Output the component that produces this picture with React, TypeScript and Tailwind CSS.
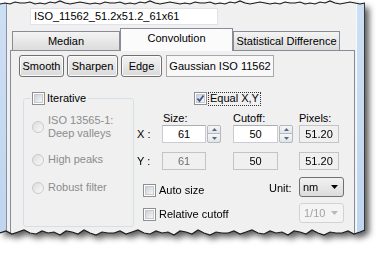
import type { ReactNode } from "react";

// torn paper edges of the screenshot
const topJag = [4, 3, 4, 2, 3, 3, 2, 4, 3, 4, 2, 3, 1, 3, 4, 3, 2, 3];
const botJag = [0, -2, 1, -1, -3, 0, 1, -2, 0, -1, 2, -2, -1, 1, -3, 0, 2, -1, 0];
const topEdge = Array.from({ length: 74 }, (_, i) => [Math.min(i * 5, 365), topJag[i % topJag.length]]);
const bottomEdge = Array.from({ length: 62 }, (_, i) => [Math.min(i * 6, 365), 233 + botJag[i % botJag.length]]);

const clip = `polygon(${[...topEdge, ...[...bottomEdge].reverse()].map(([x, y]) => `${x}px ${y}px`).join(",")})`;
const line = (pts: number[][]) => pts.map(([x, y]) => `${x},${y}`).join(" ");

const btn =
  "flex h-[22px] items-center justify-center rounded-[3px] border border-[#707070] bg-gradient-to-b from-[#f3f3f3] to-[#dadada] shadow-[inset_0_0_0_1px_#fbfbfb]";
const tab = "flex h-[19px] items-center justify-center border border-b-0 border-[#898c95] bg-gradient-to-b from-[#f4f4f4] to-[#dcdcdc]";
const field = "flex h-[18px] items-center justify-center border";

function CheckBox({ checked }: { checked?: boolean }) {
  return (
    <span className="relative flex h-[13px] w-[13px] shrink-0 items-center justify-center border border-[#8e8f8f] bg-white">
      <span className="h-[9px] w-[9px] border border-[#c6cad0] bg-gradient-to-br from-[#cdd1d6] to-[#f7f7f7]" />
      {checked && (
        <svg width="11" height="11" viewBox="0 0 11 11" className="absolute left-0 top-0">
          <path d="M2.5 5.5 L4.5 8 L8.5 2.5" fill="none" stroke="#3a5a94" strokeWidth="1.8" />
        </svg>
      )}
    </span>
  );
}

function Radio() {
  return <span className="h-[12px] w-[12px] shrink-0 rounded-full border border-[#c9c9c9] bg-gradient-to-br from-[#dcdcdc] to-[#fafafa]" />;
}

function Spinner() {
  return (
    <div className="ml-[1px] flex h-[18px] w-[14px] flex-col text-[#56688a]">
      <div className="flex h-[9px] items-center justify-center rounded-t-[2px] border border-[#b4b8bf] bg-gradient-to-b from-[#f7f7f7] to-[#e1e4e8]">
        <svg width="5" height="3" viewBox="0 0 5 3">
          <path d="M0 3H5L2.5 0Z" fill="currentColor" />
        </svg>
      </div>
      <div className="-mt-px flex h-[10px] items-center justify-center rounded-b-[2px] border border-[#b4b8bf] bg-gradient-to-b from-[#f7f7f7] to-[#e1e4e8]">
        <svg width="5" height="3" viewBox="0 0 5 3">
          <path d="M0 0H5L2.5 3Z" fill="currentColor" />
        </svg>
      </div>
    </div>
  );
}

function Select({ value, disabled }: { value: string; disabled?: boolean }) {
  return (
    <div
      className={
        disabled
          ? "flex h-[20px] w-[45px] items-center justify-between rounded-[3px] border border-[#d3d3d3] bg-[#f4f4f4] pl-[4px] pr-[5px] text-[#a3a3a3]"
          : "flex h-[20px] w-[45px] items-center justify-between rounded-[3px] border border-[#707070] bg-gradient-to-b from-[#f2f2f2] to-[#dcdcdc] pl-[3px] pr-[5px]"
      }
    >
      <span>{value}</span>
      <svg width="7" height="4" viewBox="0 0 7 4" className={disabled ? "text-[#b8b8b8]" : "text-black"}>
        <path d="M0 0H7L3.5 4Z" fill="currentColor" />
      </svg>
    </div>
  );
}

function Row({ children, className = "" }: { children: ReactNode; className?: string }) {
  return <div className={`flex items-center ${className}`}>{children}</div>;
}

export default function App() {
  return (
    <div className="relative h-[253px] w-[381px] overflow-hidden bg-white font-['Liberation_Sans',Arial,sans-serif] text-[11px] leading-[13px] text-black">
      <div className="h-[240px] w-[365px] [filter:drop-shadow(4px_4px_3px_rgba(0,0,0,0.65))]">
        <div className="flex h-full w-full bg-[#f0f0f0]" style={{ clipPath: clip }}>
          <div className="w-[6px] bg-gradient-to-b from-[#cddff3] to-[#bfd5ee]" />
          <div className="w-px bg-[#8593a6]" />

          <div className="flex w-[349px] flex-col">
            <div className="ml-[23px] mt-[8px] flex h-[17px] w-[188px] items-center border border-[#dfe2e8] bg-white pl-[3px]">
              ISO_11562_51.2x51.2_61x61
            </div>

            <div className="flex h-[25px] items-end pl-[5px]">
              <div className={`${tab} w-[108px]`}>Median</div>
              <div className="relative z-10 -mb-px flex h-[23px] w-[113px] justify-center border border-b-0 border-[#898c95] bg-[#fbfbfb] pt-[3px]">
                Convolution
              </div>
              <div className={`${tab} w-[107px]`}>Statistical Difference</div>
            </div>

            <div className="ml-[3px] w-[345px] flex-1 border-x border-t border-[#898c95] bg-[#f0f0f0]">
              <div className="flex pl-[8px] pt-[4px]">
                <div className={`${btn} w-[45px]`}>Smooth</div>
                <div className={`${btn} ml-[3px] w-[51px]`}>Sharpen</div>
                <div className={`${btn} ml-[3px] w-[41px]`}>Edge</div>
                <div className="ml-[4px] flex h-[22px] w-[108px] items-center justify-center border border-[#a8a8a8] bg-[#f8f8f8]">
                  Gaussian ISO 11562
                </div>
              </div>

              <div className="mt-[15px] flex">
                <fieldset className="ml-[12px] h-[135px] w-[111px] rounded-[3px] border border-[#d5dfe5] pl-[8px] text-[#8c8c8c]">
                  <legend className="-ml-[1px] flex items-center pl-[1px] pr-[2px] text-black">
                    <CheckBox />
                    <span className="ml-[2px]">Iterative</span>
                  </legend>
                  <Row className="mt-[9px] gap-[4px]">
                    <Radio />
                    <span>
                      ISO 13565-1:
                      <br />
                      Deep valleys
                    </span>
                  </Row>
                  <Row className="mt-[13px] gap-[4px]">
                    <Radio />
                    <span>High peaks</span>
                  </Row>
                  <Row className="mt-[15px] gap-[4px]">
                    <Radio />
                    <span>Robust filter</span>
                  </Row>
                </fieldset>

                <div className="flex w-[220px] flex-col">
                  <Row className="h-[13px] pl-[60px]">
                    <CheckBox checked />
                    <span className="ml-[1px] flex h-[14px] items-center border border-dotted border-[#333] px-[1px]">Equal X,Y</span>
                  </Row>

                  <Row className="mt-[7px] pl-[29px]">
                    <span className="w-[70px]">Size:</span>
                    <span className="w-[66px]">Cutoff:</span>
                    <span>Pixels:</span>
                  </Row>

                  <Row className="h-[18px]">
                    <span className="w-[28px] pl-[3px]">X :</span>
                    <div className={`${field} w-[44px] border-[#c9ccd2] border-t-[#abadb3] bg-white`}>61</div>
                    <Spinner />
                    <div className={`${field} ml-[12px] w-[45px] border-[#c9ccd2] border-t-[#abadb3] bg-white`}>50</div>
                    <Spinner />
                    <div className={`${field} ml-[6px] w-[40px] border-[#c4c4c4] bg-[#f0f0f0]`}>51.20</div>
                  </Row>

                  <Row className="mt-[9px] h-[18px]">
                    <span className="w-[28px] pl-[3px]">Y :</span>
                    <div className={`${field} w-[44px] border-[#c4c4c4] bg-[#f0f0f0] text-[#6d6d6d]`}>61</div>
                    <div className={`${field} ml-[27px] w-[45px] border-[#c4c4c4] bg-[#f0f0f0]`}>50</div>
                    <div className={`${field} ml-[21px] w-[40px] border-[#c4c4c4] bg-[#f0f0f0]`}>51.20</div>
                  </Row>

                  <div className="mt-[7px] flex h-[20px] items-end">
                    <div className="flex w-[135px] items-center pl-[9px]">
                      <CheckBox />
                      <span className="ml-[3px]">Auto size</span>
                    </div>
                    <span className="mb-[2px] w-[30px]">Unit:</span>
                    <Select value="nm" />
                  </div>

                  <div className="mt-[6px] flex h-[20px] items-end">
                    <div className="mb-[2px] flex w-[165px] items-center pl-[9px]">
                      <CheckBox />
                      <span className="ml-[3px]">Relative cutoff</span>
                    </div>
                    <Select value="1/10" disabled />
                  </div>
                </div>
              </div>
            </div>
          </div>

          <div className="w-px bg-[#f8fbfe]" />
          <div className="w-[7px] bg-gradient-to-b from-[#cddff3] to-[#bfd5ee]" />
          <div className="w-px bg-[#3a3a3a]" />
        </div>
      </div>

      <svg className="pointer-events-none absolute left-0 top-0" width="381" height="253">
        <polyline points={line(topEdge)} fill="none" stroke="#1a1a1a" strokeWidth="1.2" />
        <polyline points={line(bottomEdge)} fill="none" stroke="#1a1a1a" strokeWidth="1.2" />
      </svg>
    </div>
  );
}
